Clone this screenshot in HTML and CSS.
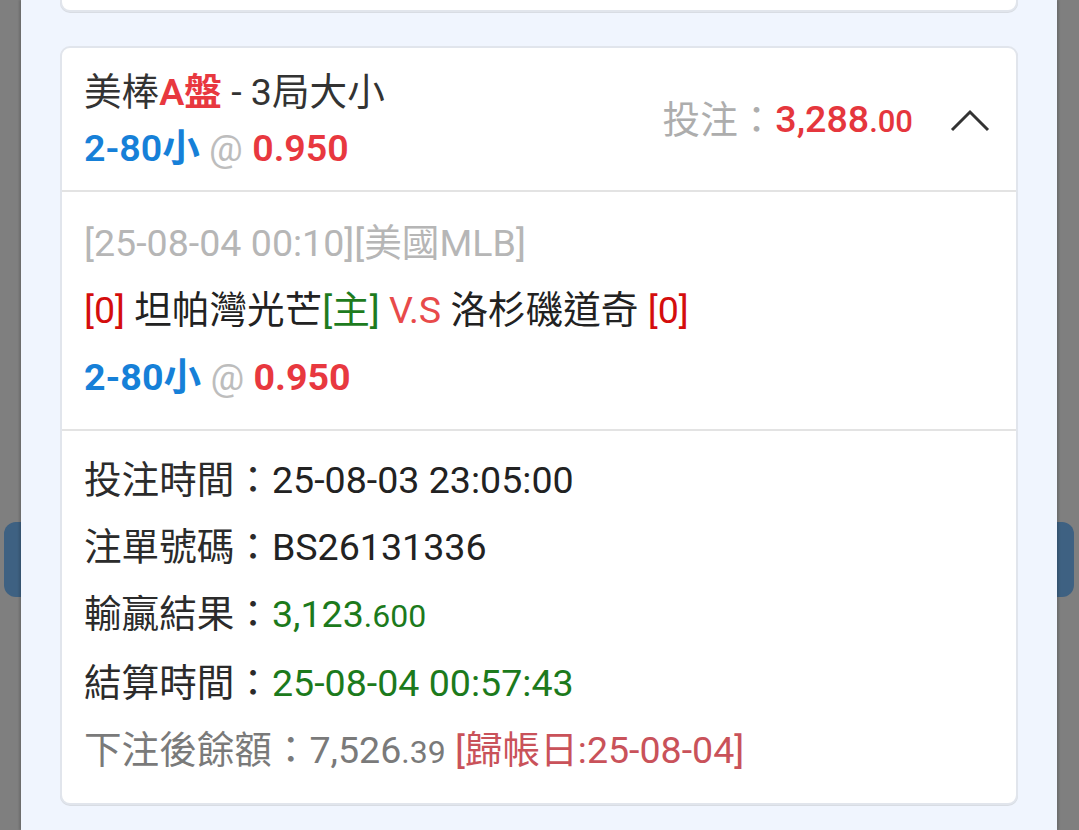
FILE: index.html
```html
<!DOCTYPE html>
<html lang="zh-Hant">
<head>
    <meta charset="UTF-8">
    <meta name="viewport" content="width=device-width, initial-scale=1.0">
    <title>注單明細</title>
    <link rel="stylesheet" href="styles.css">
</head>
<body>
    <!-- button of the page under the dialog, only its ends show -->
    <div class="under-btn"></div>

    <div class="panel">
        <div class="card card-prev"></div>

        <div class="card">
            <div class="bet-head">
                <div class="bet-title">
                    <div>美棒<b class="red">A盤</b> - 3局大小</div>
                    <div class="pick"><b class="blue">2-80小</b> <span class="at">@</span> <b class="red">0.950</b></div>
                </div>
                <div class="bet-amount">
                    <span class="label-gray">投注：</span><span class="amount">3,288<small>.00</small></span>
                    <svg class="chevron" width="40" height="24" viewBox="0 0 40 24">
                        <polyline points="2,21 20,3 38,21" fill="none" stroke="#333" stroke-width="3"/>
                    </svg>
                </div>
            </div>

            <div class="bet-body">
                <div class="match-time">[25-08-04 00:10][美國MLB]</div>
                <div class="teams"><span class="score">[0]</span> 坦帕灣光芒<span class="home">[主]</span> <span class="vs">V.S</span> 洛杉磯道奇 <span class="score">[0]</span></div>
                <div class="pick"><b class="blue">2-80小</b> <span class="at">@</span> <b class="red">0.950</b></div>
            </div>

            <div class="bet-info">
                <div>投注時間：<span class="val">25-08-03 23:05:00</span></div>
                <div>注單號碼：<span class="val">BS26131336</span></div>
                <div>輸贏結果：<span class="green">3,123<small>.600</small></span></div>
                <div>結算時間：<span class="green">25-08-04 00:57:43</span></div>
                <div class="balance">下注後餘額：7,526<small>.39</small> <span class="settle">[歸帳日:25-08-04]</span></div>
            </div>
        </div>
    </div>
</body>
</html>
```

FILE: styles.css
```css
body {
    margin: 0;
    height: 830px;
    overflow: hidden;
    background-color: #7f7f7f;
    font-family: Roboto, "Noto Sans CJK TC", sans-serif;
    font-size: 37.6px;
    color: #2b2b2b;
    position: relative;
}
.under-btn {
    position: absolute;
    top: 522px;
    left: 4px;
    right: 5px;
    height: 75px;
    border-radius: 12px;
    background-color: #3e6182;
}
.panel {
    position: relative;
    margin: 0 22px 0 21px;
    height: 830px;
    padding: 0 39px;
    background-color: #f0f5fe;
    box-shadow: -2px 0 2px rgba(0, 0, 0, 0.15), 2px 0 2px rgba(0, 0, 0, 0.15);
    display: flex;
    flex-direction: column;
    gap: 34px;
}
.card {
    background-color: #fff;
    border: 2px solid #e1e5ec;
    border-radius: 10px;
    box-shadow: 0 1px 0 #d8dce3;
}
.card-prev {
    height: 100px;
    margin-top: -92px;
}
.bet-head {
    display: flex;
    align-items: center;
    justify-content: space-between;
    padding: 16px 26px 14px 22px;
    line-height: 56px;
}
.bet-title {
    color: #333;
}
.bet-title > div > b {
    font-weight: 600;
}
.bet-amount {
    display: flex;
    align-items: center;
}
.label-gray {
    color: #adadad;
}
.amount {
    color: #e5363d;
    font-weight: 500;
}
.amount small {
    font-size: 31px;
}
.chevron {
    margin-left: 37px;
    margin-top: 2px;
}
.red {
    color: #e8383f;
}
.blue {
    color: #1680d8;
}
.at {
    color: #bdbdbd;
}
.pick b {
    font-weight: 700;
}
.bet-body {
    border-top: 2px solid #e3e3e3;
    padding: 18px 22px;
    line-height: 67px;
}
.match-time {
    color: #b6b6b6;
}
.teams {
    color: #222;
}
.score {
    color: #d40d0d;
}
.home {
    color: #1e7b1e;
}
.vs {
    color: #e84a4a;
}
.bet-info {
    border-top: 2px solid #e3e3e3;
    padding: 16px 22px 17px;
    line-height: 67px;
    color: #2b2b2b;
}
.val {
    color: #222;
}
.green {
    color: #1c7a1c;
}
.green small,
.balance small {
    font-size: 32px;
}
.balance {
    color: #7a7a7a;
}
.settle {
    color: #c9525a;
}
```
